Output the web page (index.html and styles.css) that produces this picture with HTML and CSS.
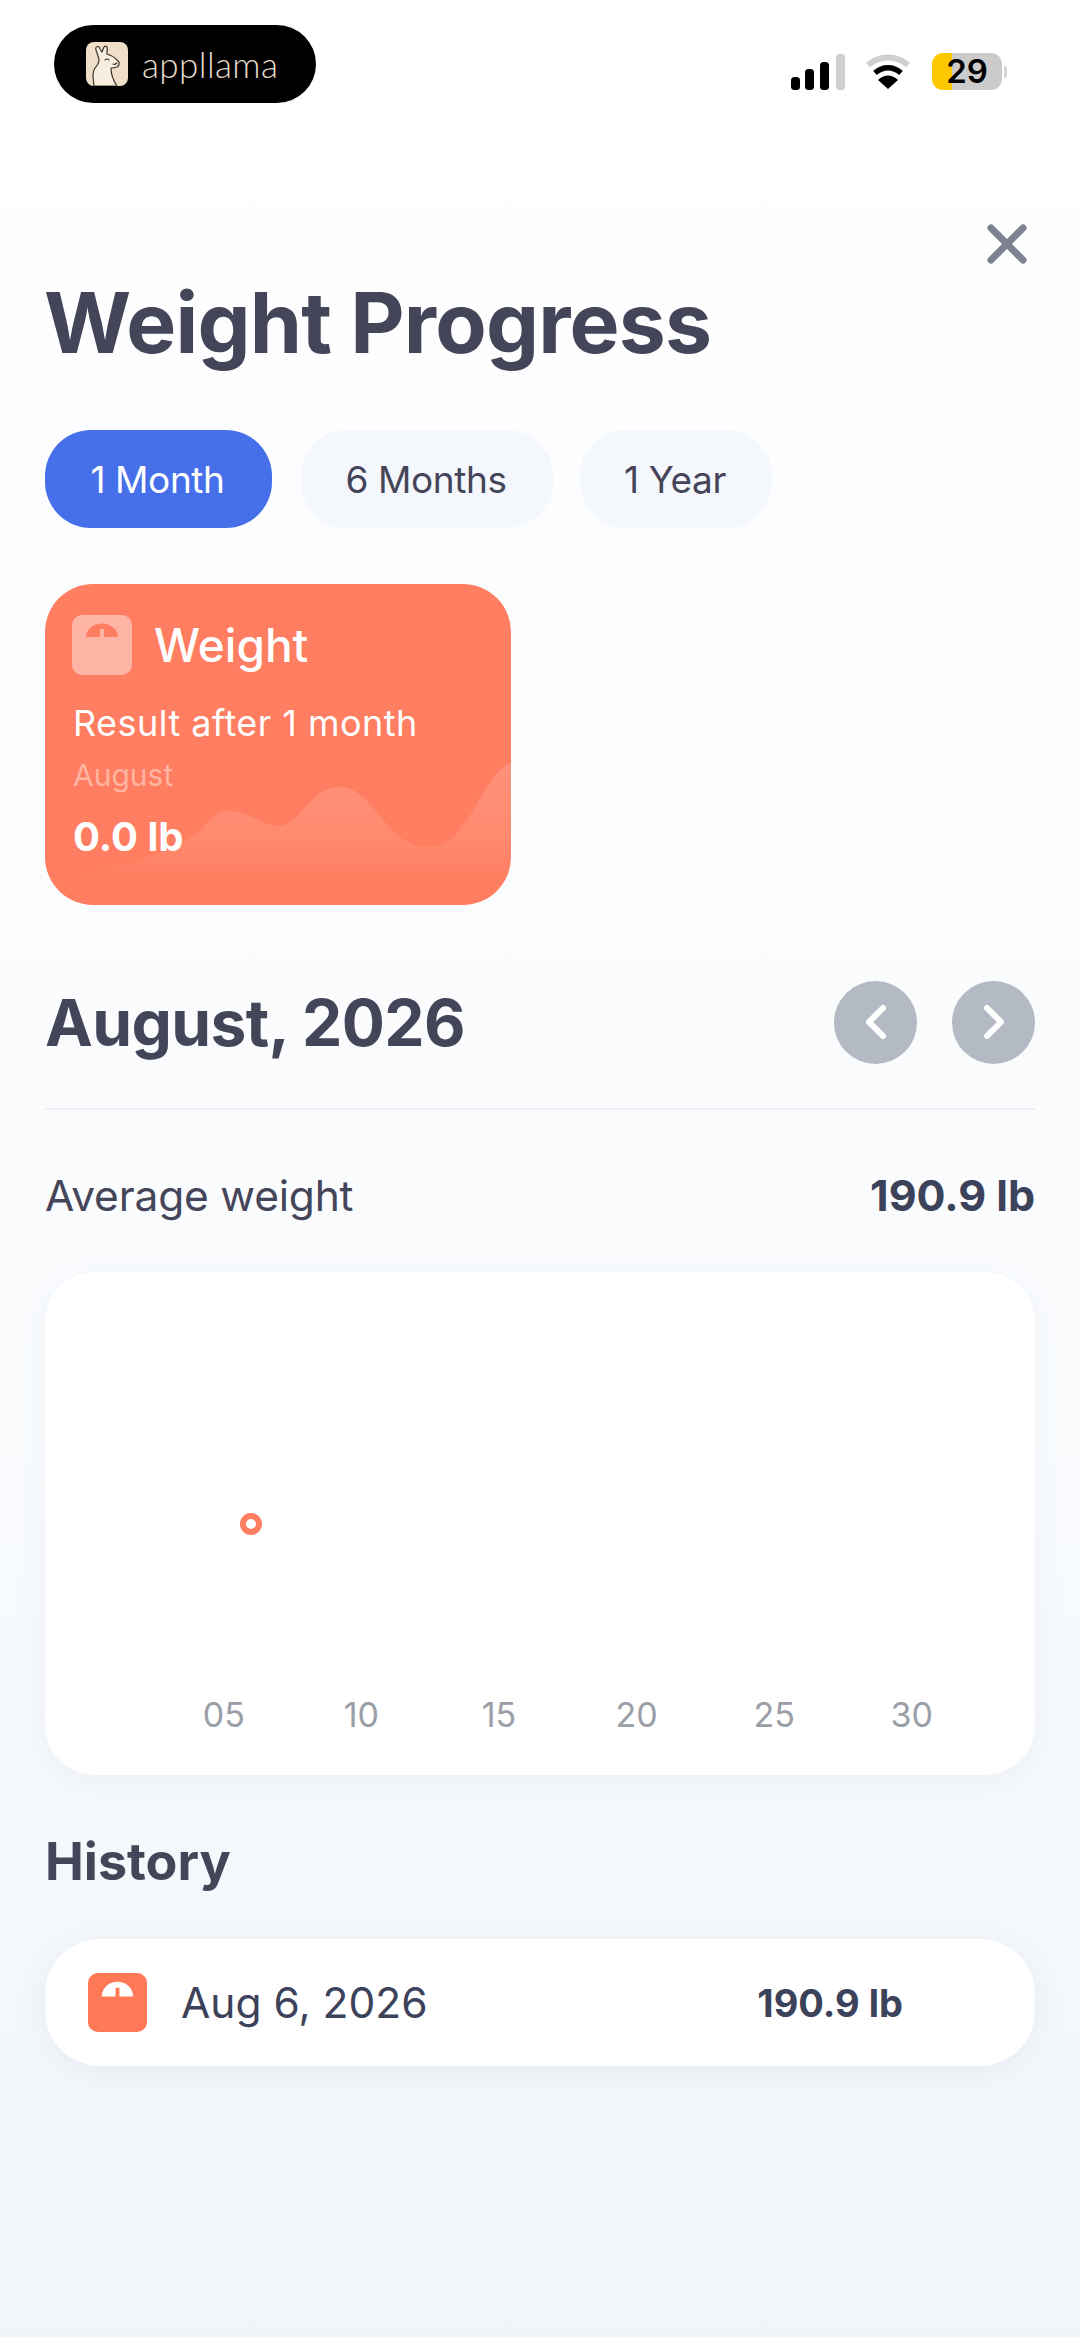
FILE: index.html
```html
<!doctype html>
<html>
   <head>
      <title>Weight Progress</title>
      <link rel="stylesheet" href="styles.css">
   </head>
   <body>
      <header class="status-bar">
         <div class="brand">
            <svg class="brand-icon" viewBox="0 0 42 44">
               <rect width="42" height="44" rx="8" fill="#efdfc8"/>
               <path d="M8 44C7 36 6 30 9 26C12 23 13 21 13 17L10 8C9 4 13 3 14 7L16 10L18 5C20 3 22 5 21 9L21 12C25 13 28 15 31 18C34 20 34 23 31 25C28 26 26 26 25 26C25 32 27 38 31 44Z" fill="#f8eedf" stroke="#3f362c" stroke-width="1.2" stroke-linejoin="round"/>
               <path d="M19 18Q21 16 23 18M27 22Q29 23 31 21" fill="none" stroke="#3f362c" stroke-width="1.1" stroke-linecap="round"/>
            </svg>
            <span class="brand-name">appllama</span>
         </div>
         <div class="status-icons">
            <svg class="signal" viewBox="0 0 54 36">
               <rect x="0" y="23" width="9" height="13" rx="3.5" fill="#000"/>
               <rect x="14" y="15" width="9" height="21" rx="3.5" fill="#000"/>
               <rect x="29" y="8" width="9" height="28" rx="3.5" fill="#000"/>
               <rect x="45" y="0" width="9" height="36" rx="3.5" fill="#cfcfcf"/>
            </svg>
            <svg class="wifi" viewBox="0 0 46 36">
               <path d="M3 11C15 1 31 1 43 11" fill="none" stroke="#cfcfcf" stroke-width="6"/>
               <path d="M10 19C18 12 28 12 36 19" fill="none" stroke="#000" stroke-width="5.5"/>
               <path d="M23 35L13 26C19 20 27 20 33 26Z" fill="#000"/>
            </svg>
            <div class="battery">
               <span class="battery-level">29</span>
            </div>
            <span class="battery-cap"></span>
         </div>
      </header>

      <main class="page">
         <div class="close-row">
            <svg class="close" viewBox="0 0 40 40">
               <path d="M4 4L36 36M36 4L4 36" fill="none" stroke="#7c8290" stroke-width="7" stroke-linecap="round"/>
            </svg>
         </div>
         <h1 class="title">Weight Progress</h1>

         <div class="tabs">
            <span class="tab tab-active">1 Month</span>
            <span class="tab tab-six">6 Months</span>
            <span class="tab tab-year">1 Year</span>
         </div>

         <section class="result-card">
            <svg class="wave" viewBox="0 0 466 150">
               <defs>
                  <linearGradient id="waveFill" gradientUnits="userSpaceOnUse" x1="0" y1="8" x2="0" y2="128">
                     <stop offset="0" stop-color="#fff" stop-opacity="0.16"/>
                     <stop offset="0.6" stop-color="#fff" stop-opacity="0.1"/>
                     <stop offset="1" stop-color="#fff" stop-opacity="0"/>
                  </linearGradient>
               </defs>
               <path d="M0 125C60 120 120 100 153 78C165 65 170 56 185 56C205 56 215 71 234 71C255 71 265 32 294 32C330 32 340 92 383 92C425 92 435 20 466 8V150H0Z" fill="url(#waveFill)"/>
            </svg>
            <div class="result-head">
               <svg class="scale-icon" viewBox="0 0 60 60">
                  <rect width="60" height="60" rx="10" fill="#ffb5a5"/>
                  <path d="M14 22C15 4 45 4 46 22H32V14H28V22Z" fill="#ff7d60"/>
               </svg>
               <span class="result-title">Weight</span>
            </div>
            <p class="result-sub">Result after 1 month</p>
            <p class="result-month">August</p>
            <p class="result-value">0.0 lb</p>
         </section>

         <div class="month-row">
            <h2 class="month">August, 2026</h2>
            <div class="month-nav">
               <span class="nav-btn">
                  <svg viewBox="0 0 24 36"><path d="M19 4L5 18L19 32" fill="none" stroke="#fff" stroke-width="6" stroke-linecap="round" stroke-linejoin="round"/></svg>
               </span>
               <span class="nav-btn">
                  <svg viewBox="0 0 24 36"><path d="M5 4L19 18L5 32" fill="none" stroke="#fff" stroke-width="6" stroke-linecap="round" stroke-linejoin="round"/></svg>
               </span>
            </div>
         </div>

         <div class="average-row">
            <span class="average-label">Average weight</span>
            <span class="average-value">190.9 lb</span>
         </div>

         <section class="chart-card">
            <div class="plot">
               <span class="point"></span>
            </div>
            <div class="axis">
               <span>05</span><span>10</span><span>15</span><span>20</span><span>25</span><span>30</span>
            </div>
         </section>

         <h3 class="history-title">History</h3>
         <section class="history-row">
            <svg class="history-icon" viewBox="0 0 60 60">
               <rect width="60" height="60" rx="10" fill="#ff7957"/>
               <path d="M14 24C15 4 45 4 46 24H32V15H28V24Z" fill="#fff"/>
            </svg>
            <span class="history-date">Aug 6, 2026</span>
            <span class="history-value">190.9 lb</span>
         </section>
      </main>
   </body>
</html>
```
FILE: styles.css
```css
* {
   margin: 0;
   padding: 0;
   box-sizing: border-box;
}

body {
   width: 1080px;
   height: 2337px;
   overflow: hidden;
   font-family: "Inter", "Liberation Sans", sans-serif;
   color: #45455a;
   background: linear-gradient(180deg, #ffffff 0%, #fbfcfe 30%, #f9fbfd 60%, #f1f5fa 100%);
}

/* Status bar */
.status-bar {
   display: flex;
   justify-content: space-between;
   align-items: flex-start;
   padding: 25px 73px 0 54px;
   height: 200px;
}

.brand {
   display: flex;
   align-items: center;
   gap: 14px;
   width: 262px;
   height: 78px;
   padding-left: 32px;
   background: #000;
   border-radius: 39px;
}

.brand-icon {
   width: 42px;
   height: 44px;
}

.brand-name {
   font-family: "Lato", sans-serif;
   font-size: 35px;
   font-weight: 300;
   letter-spacing: 0.4px;
   color: #e6dccb;
}

.status-icons {
   display: flex;
   align-items: center;
   margin-top: 28px;
}

.signal {
   width: 54px;
   height: 36px;
}

.wifi {
   width: 46px;
   height: 36px;
   margin-left: 20px;
}

.battery {
   width: 70px;
   height: 37px;
   margin-left: 21px;
   border-radius: 11px;
   background: linear-gradient(90deg, #fdc800 0 29%, #cbcbcb 29% 100%);
   text-align: center;
}

.battery-level {
   font-size: 33px;
   font-weight: 600;
   line-height: 37px;
   color: #000;
}

.battery-cap {
   width: 3px;
   height: 12px;
   margin-left: 2px;
   background: #d6d6d6;
   border-radius: 0 3px 3px 0;
}

/* Page */
.page {
   display: flex;
   flex-direction: column;
   padding: 0 45px;
}

.close-row {
   display: flex;
   justify-content: flex-end;
   margin: 24px 8px 0 0;
}

.close {
   width: 40px;
   height: 40px;
}

.title {
   margin: 9px 0 0 -1px;
   font-size: 84px;
   line-height: 100px;
   font-weight: 700;
   letter-spacing: -0.8px;
}

.tabs {
   display: flex;
   gap: 29px;
   margin-top: 57px;
}

.tab {
   display: flex;
   align-items: center;
   justify-content: center;
   height: 98px;
   padding-right: 2px;
   border-radius: 46px;
   font-size: 37px;
   background: #f4f7fb;
   letter-spacing: -0.4px;
}

.tab-active {
   width: 227px;
   color: #fff;
   background: #4570ea;
}

.tab-six {
   width: 252px;
}

.tab-year {
   width: 192px;
   margin-left: -2px;
}

/* Result card */
.result-card {
   position: relative;
   overflow: hidden;
   width: 466px;
   height: 321px;
   margin-top: 56px;
   padding: 31px 27px 0;
   background: #ff7d60;
   border-radius: 48px;
   color: #fff;
}

.wave {
   position: absolute;
   left: 0;
   bottom: 0;
   width: 466px;
   height: 150px;
}

.result-head {
   position: relative;
   display: flex;
   align-items: center;
   gap: 22px;
}

.scale-icon {
   width: 60px;
   height: 60px;
}

.result-title {
   font-size: 46px;
   font-weight: 500;
}

.result-sub {
   position: relative;
   margin: 26px 0 0 1px;
   font-size: 36px;
   line-height: 44px;
   letter-spacing: 0.45px;
}

.result-month {
   position: relative;
   margin: 10px 0 0 1px;
   font-size: 30px;
   line-height: 40px;
   color: #ffb3a1;
}

.result-value {
   position: relative;
   margin: 17px 0 0 1px;
   font-size: 40px;
   line-height: 50px;
   font-weight: 700;
}

/* Month header */
.month-row {
   display: flex;
   justify-content: space-between;
   align-items: center;
   height: 150px;
   margin-top: 55px;
   padding-bottom: 24px;
   border-bottom: 2px solid #edf0f4;
}

.month {
   font-size: 64px;
   font-weight: 700;
   letter-spacing: -0.6px;
}

.month-nav {
   display: flex;
   gap: 35px;
}

.nav-btn {
   display: flex;
   align-items: center;
   justify-content: center;
   width: 83px;
   height: 83px;
   border-radius: 50%;
   background: #b4bac4;
}

.nav-btn svg {
   width: 24px;
   height: 36px;
}

.average-row {
   display: flex;
   justify-content: space-between;
   align-items: center;
   height: 50px;
   margin-top: 60px;
}

.average-label {
   font-size: 42.5px;
   letter-spacing: -0.2px;
}

.average-value {
   font-size: 43px;
   font-weight: 700;
   color: #3c4259;
}

/* Chart */
.chart-card {
   display: flex;
   flex-direction: column;
   height: 503px;
   margin-top: 52px;
   background: #fff;
   border-radius: 50px;
   box-shadow: 0 6px 30px rgba(120, 140, 170, 0.08);
}

.plot {
   position: relative;
   flex: 1;
}

.point {
   position: absolute;
   left: 195px;
   top: 241px;
   width: 22px;
   height: 22px;
   border: 6px solid #ff7d60;
   border-radius: 50%;
   background: #fff;
}

.axis {
   display: grid;
   grid-template-columns: repeat(6, 137.6px);
   justify-items: center;
   padding-left: 110px;
   height: 81px;
   font-size: 34px;
   color: #9a9ea6;
}

/* History */
.history-title {
   margin-top: 62px;
   font-size: 52px;
   line-height: 50px;
   font-weight: 700;
}

.history-row {
   display: flex;
   align-items: center;
   height: 127px;
   margin-top: 52px;
   padding-left: 43px;
   background: #fff;
   border-radius: 55px;
   box-shadow: 0 6px 30px rgba(120, 140, 170, 0.1);
}

.history-icon {
   width: 59px;
   height: 59px;
}

.history-date {
   margin-left: 34px;
   font-size: 42.5px;
   color: #3c4259;
}

.history-value {
   margin-left: auto;
   margin-right: 132px;
   font-size: 38px;
   font-weight: 700;
   color: #3c4259;
}
```
